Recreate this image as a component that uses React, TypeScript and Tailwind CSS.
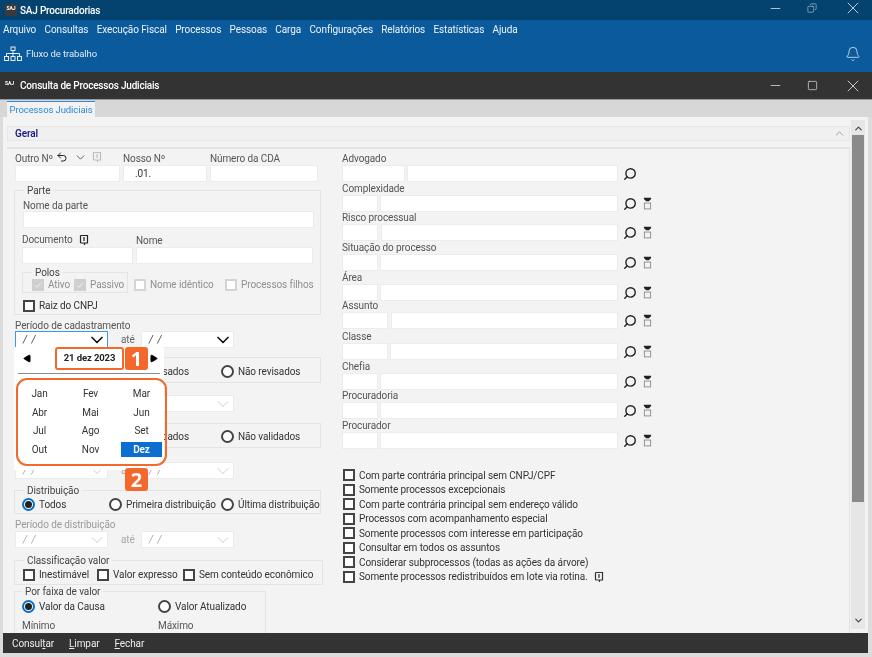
import { Bell, ChevronDown, ChevronUp, Copy, Minus, Play, Search, Square, Undo2, X } from 'lucide-react'

const MENU = ['Arquivo', 'Consultas', 'Execução Fiscal', 'Processos', 'Pessoas', 'Carga', 'Configurações', 'Relatórios', 'Estatísticas', 'Ajuda']
const MESES = ['Jan', 'Fev', 'Mar', 'Abr', 'Mai', 'Jun', 'Jul', 'Ago', 'Set', 'Out', 'Nov', 'Dez']
const OPCOES = [
  'Com parte contrária principal sem CNPJ/CPF',
  'Somente processos excepcionais',
  'Com parte contrária principal sem endereço válido',
  'Processos com acompanhamento especial',
  'Somente processos com interesse em participação',
  'Consultar em todos os assuntos',
  'Considerar subprocessos (todas as ações da árvore)',
  'Somente processos redistribuídos em lote via rotina.',
]
const CAMPOS = [
  { label: 'Advogado', cod: 63, gap: 2, top: 0, filtro: false },
  { label: 'Complexidade', cod: 36, gap: 2, top: 0, filtro: true },
  { label: 'Risco processual', cod: 36, gap: 3, top: -1, filtro: true },
  { label: 'Situação do processo', cod: 36, gap: 2, top: 0, filtro: true },
  { label: 'Área', cod: 36, gap: 2, top: 0, filtro: true },
  { label: 'Assunto', cod: 46, gap: 3, top: -2, filtro: true },
  { label: 'Classe', cod: 46, gap: 2, top: 1, filtro: true },
  { label: 'Chefia', cod: 36, gap: 2, top: 0, filtro: true },
  { label: 'Procuradoria', cod: 36, gap: 2, top: -1, filtro: true },
  { label: 'Procurador', cod: 36, gap: 2, top: 0, filtro: true },
]

function Input({ className = '', children }: { className?: string; children?: React.ReactNode }) {
  return <div className={`h-[17px] bg-white border border-[#ececec] text-[#333] flex items-center ${className}`}>{children}</div>
}

function Check({ label, marcado, off, className = '' }: { label: string; marcado?: boolean; off?: boolean; className?: string }) {
  return (
    <label className={`flex items-center gap-[4px] ${off ? 'text-[#8f8f8f]' : 'text-[#333]'} ${className}`}>
      <span className={`w-[12px] h-[12px] flex items-center justify-center shrink-0 border-2 ${marcado ? 'bg-[#cfcfcf] border-[#cfcfcf]' : off ? 'bg-white border-[#d4d4d4]' : 'bg-white border-[#444]'}`}>
        {marcado && (
          <svg viewBox="0 0 12 12" className="w-[10px] h-[10px]">
            <path d="M1.5 6.5 4.5 9.5 10.5 2.5" fill="none" stroke="#f2f2f2" strokeWidth="1.4" />
          </svg>
        )}
      </span>
      <span className="whitespace-nowrap">{label}</span>
    </label>
  )
}

function Radio({ label, marcado, className = '' }: { label: string; marcado?: boolean; className?: string }) {
  return (
    <label className={`flex items-center gap-[4px] text-[#333] ${className}`}>
      <span className={`w-[13px] h-[13px] rounded-full border-2 flex items-center justify-center shrink-0 bg-white ${marcado ? 'border-[#0a6fc9]' : 'border-[#444]'}`}>
        {marcado && <span className="w-[7px] h-[7px] rounded-full bg-[#222]" />}
      </span>
      <span className="whitespace-nowrap">{label}</span>
    </label>
  )
}

function Data({ ativo, off, className = '' }: { ativo?: boolean; off?: boolean; className?: string }) {
  return (
    <div className={`w-[93px] h-[17px] flex items-center justify-between pl-[7px] bg-white border ${ativo ? 'border-[#3b9be0]' : 'border-[#ececec]'} ${off ? 'text-[#a8a8a8]' : 'text-[#444]'} ${className}`}>
      <span className="italic tracking-[1px]">/ /</span>
      <ChevronDown size={20} strokeWidth={off ? 1 : 2} className={off ? 'text-[#c4c4c4]' : 'text-[#111]'} />
    </div>
  )
}

function Grupo({ titulo, className = '', children }: { titulo?: string; className?: string; children: React.ReactNode }) {
  return (
    <fieldset className={`border border-[#e4e4e4] ${className}`}>
      {titulo && <legend className="ml-[9px] px-[3px] h-[14px] leading-[16px] text-[#444]">{titulo}</legend>}
      {children}
    </fieldset>
  )
}

function Lupa() {
  return <Search size={14} strokeWidth={2.4} className="-scale-x-100 text-[#222]" />
}

function Filtro() {
  return (
    <svg viewBox="0 0 10 14" className="w-[9px] h-[13px]">
      <path d="M1 0.5h8v1.5L6.5 4.5h-3L1 2z" fill="#222" />
      <rect x="1.5" y="6.5" width="7" height="6.5" fill="#f2f2f2" stroke="#8a8a8a" />
    </svg>
  )
}

function Nota({ className = '' }: { className?: string }) {
  return (
    <svg viewBox="0 0 12 12" className={`w-[12px] h-[12px] ${className}`}>
      <path d="M2.5 1.5h7v7.5H6.5v2M6.5 9h-4zM2.5 1.5V9M6 3v4" fill="none" stroke="currentColor" strokeWidth="1.2" />
    </svg>
  )
}

function Badge({ n, className = '' }: { n: number; className?: string }) {
  return (
    <div className={`absolute w-[23px] h-[23px] rounded-[3px] bg-[#f4682c] text-white font-bold text-[20px] leading-[23px] text-center font-['Open_Sans',sans-serif] ${className}`}>{n}</div>
  )
}

function Calendario() {
  return (
    <div className="absolute left-[-1px] top-[16px] z-10 w-[150px] h-[123px] bg-white">
      <div className="h-[23px] flex items-center">
        <Play size={9} className="ml-[9px] rotate-180 fill-black text-black" />
        <div className="ml-[23px] w-[69px] h-[23px] border-2 border-[#f4682c] rounded-[3px] font-bold text-[9.5px] text-[#222] flex items-center justify-center">21 dez 2023</div>
        <Play size={9} className="ml-[25px] fill-black text-black" />
      </div>
      <div className="mx-[4px] mt-[3px] h-px bg-[#8c8c8c]" />
      <div className="grid grid-cols-3 mt-[12px] w-[153px]">
        {MESES.map(m => (
          <div key={m} className={`h-[15px] mb-[3.6px] flex items-center justify-center ${m === 'Dez' ? 'w-[41px] justify-self-center bg-[#0a6fd0] text-white font-semibold' : 'text-[#333]'}`}>{m}</div>
        ))}
      </div>
      <div className="absolute left-[2px] top-[31px] w-[151px] h-[88px] rounded-[11px] border-2 border-[#f4682c]" />
      <Badge n={1} className="left-[111px] top-0" />
      <Badge n={2} className="left-[111px] top-[121px]" />
    </div>
  )
}

function ColunaEsquerda() {
  return (
    <div className="w-[309px] shrink-0 ml-[7px] pt-[3px]">
      <div className="flex pl-[1px] text-[#555]">
        <div className="w-[108px]">
          <div className="h-[13px] leading-[13px] flex items-center">
            Outro Nº
            <Undo2 size={12} strokeWidth={2} className="ml-[3px] -mt-[3px] text-[#222]" />
            <ChevronDown size={13} strokeWidth={1.5} className="ml-[6px] -mt-[3px] text-[#444]" />
            <Nota className="ml-[4px] -mt-[3px] text-[#bdbdbd]" />
          </div>
          <Input className="w-[105px]" />
        </div>
        <div className="w-[87px]">
          <div className="h-[13px] leading-[13px]">Nosso Nº</div>
          <Input className="w-[84px] pl-[11px] text-[#222]">.01.</Input>
        </div>
        <div>
          <div className="h-[13px] leading-[13px]">Número da CDA</div>
          <Input className="w-[108px]" />
        </div>
      </div>

      <Grupo titulo="Parte" className="h-[132px] mt-[1px] w-[307px]">
        <div className="pl-[8px] text-[#555]">
          <div className="h-[14px] leading-[18px]">Nome da parte</div>
          <Input className="w-[291px]" />
          <div className="flex mt-[5px]">
            <div className="w-[113px]">
              <div className="h-[14px] leading-[16px] flex items-center -ml-[1px]">Documento<Nota className="ml-[5px] text-[#222]" /></div>
              <Input className="w-[111px] -ml-[1px]" />
            </div>
            <div>
              <div className="h-[14px] leading-[16px]">Nome</div>
              <Input className="w-[177px]" />
            </div>
          </div>
          <div className="flex items-start h-[30px] mt-[1px] -ml-[1px]">
            <Grupo titulo="Polos" className="w-[106px] h-[28px]">
              <div className="flex pl-[9px] -mt-[2px]">
                <Check label="Ativo" marcado off className="w-[42px]" />
                <Check label="Passivo" marcado off />
              </div>
            </Grupo>
            <div className="flex ml-[6px] mt-[12px]">
              <Check label="Nome idêntico" off className="w-[91px]" />
              <Check label="Processos filhos" off />
            </div>
          </div>
          <div className="mt-[3px]"><Check label="Raiz do CNPJ" /></div>
        </div>
      </Grupo>

      <div className="pl-[1px] mt-[3px] h-[13px] leading-[16px] text-[#555]">Período de cadastramento</div>
      <div className="flex items-center pl-[1px] text-[#666]">
        <div className="relative">
          <Data ativo />
          <Calendario />
        </div>
        <span className="ml-[13px] w-[20px]">até</span>
        <Data />
      </div>

      <Grupo className="h-[26px] mt-[9px] w-[307px]">
        <div className="relative h-full pt-[2px] flex items-center">
          <span className="absolute right-[131px] text-[#333]">Revisados</span>
          <Radio label="Não revisados" className="ml-[206px]" />
        </div>
      </Grupo>
      <div className="flex pl-[127px] mt-[12px]"><Data off /></div>
      <Grupo className="h-[25px] mt-[11px] w-[307px]">
        <div className="relative h-full pt-[2px] flex items-center">
          <span className="absolute right-[131px] text-[#333]">Validados</span>
          <Radio label="Não validados" className="ml-[206px]" />
        </div>
      </Grupo>
      <div className="flex items-center pl-[1px] mt-[14px] text-[#a8a8a8]">
        <Data off />
        <span className="ml-[13px] w-[20px]">até</span>
        <Data off />
      </div>

      <Grupo titulo="Distribuição" className="h-[31px] mt-[4px] w-[307px]">
        <div className="flex">
          <Radio label="Todos" marcado className="ml-[7px] w-[87px]" />
          <Radio label="Primeira distribuição" className="w-[112px]" />
          <Radio label="Última distribuição" />
        </div>
      </Grupo>

      <div className="pl-[1px] mt-[3px] h-[14px] leading-[16px] text-[#9a9a9a]">Período de distribuição</div>
      <div className="flex items-center pl-[1px] text-[#a8a8a8]">
        <Data off />
        <span className="ml-[13px] w-[20px]">até</span>
        <Data off />
      </div>

      <Grupo titulo="Classificação valor" className="h-[32px] mt-[5px] w-[309px]">
        <div className="flex pl-[8px]">
          <Check label="Inestimável" className="w-[74px]" />
          <Check label="Valor expresso" className="w-[86px]" />
          <Check label="Sem conteúdo econômico" />
        </div>
      </Grupo>

      <Grupo titulo="Por faixa de valor" className="h-[60px] -mt-[1px] w-[252px] [&>legend]:ml-[7px]">
        <div className="flex pl-[7px] pt-[1px]">
          <Radio label="Valor da Causa" marcado className="w-[136px]" />
          <Radio label="Valor Atualizado" />
        </div>
        <div className="flex pl-[7px] mt-[4px] text-[#555]">
          <span className="w-[136px]">Mínimo</span>
          <span>Máximo</span>
        </div>
      </Grupo>
    </div>
  )
}

function ColunaDireita() {
  return (
    <div className="ml-[19px] w-[330px] pt-[3px] text-[#555]">
      {CAMPOS.map(c => (
        <div key={c.label} style={{ marginTop: c.top }}>
          <div className="h-[13px] leading-[13px]">{c.label}</div>
          <div className="flex items-center">
            <div className="w-[276px] flex shrink-0" style={{ gap: c.gap }}>
              <div style={{ width: c.cod }} className="shrink-0"><Input /></div>
              <Input className="flex-1" />
            </div>
            <div className="flex items-center pl-[5px] gap-[6px]">
              <Lupa />
              {c.filtro && <Filtro />}
            </div>
          </div>
        </div>
      ))}
      <div className="mt-[20px] flex flex-col gap-[2.5px] ml-[1px]">
        {OPCOES.map(o => (
          <div key={o} className="h-[12px] flex items-center">
            <Check label={o} />
            {o.endsWith('rotina.') && <Nota className="ml-[5px] text-[#333]" />}
          </div>
        ))}
      </div>
    </div>
  )
}

export default function App() {
  return (
    <div className="w-[872px] h-[657px] overflow-hidden flex flex-col bg-[#dcdcdc] text-[10px] font-['Roboto',sans-serif] tracking-[-0.1px] blur-[0.35px]">
      <div className="h-[20px] shrink-0 bg-[#04436f] flex items-center text-white">
        <div className="ml-[5px] w-[12px] h-[12px] bg-[#3a3a3a] text-[5px] font-bold leading-[9px] text-center">SAJ</div>
        <span className="ml-[3px] text-[10px] font-medium tracking-[-0.2px]">SAJ Procuradorias</span>
        <Minus size={15} strokeWidth={1.2} className="ml-auto mr-[24px] -mt-[4px] text-[#e2ebf2]" />
        <Copy size={10} strokeWidth={1.2} className="mr-[26px] -mt-[4px] text-[#e2ebf2] -scale-x-100" />
        <X size={20} strokeWidth={1} className="mr-[9px] -mt-[4px] text-[#e2ebf2]" />
      </div>

      <div className="h-[52px] shrink-0 bg-[#0a5a9c] text-[#eef3f8]">
        <div className="flex gap-[8.3px] pl-[3px] pt-[1px] h-[18px] items-center">
          {MENU.map(m => <span key={m}>{m}</span>)}
        </div>
        <div className="flex items-center h-[32px] pl-[4px] pr-[11px]">
          <svg viewBox="0 0 18 16" className="w-[18px] h-[16px]" fill="none" stroke="#e6edf3" strokeWidth="1">
            <rect x="7" y="1" width="4" height="3.5" />
            <path d="M9 4.5v3M2.5 10.5V7.5h13v3M9 7.5v3" />
            <rect x="0.5" y="10.5" width="4" height="4" />
            <rect x="7" y="10.5" width="4" height="4" />
            <rect x="13.5" y="10.5" width="4" height="4" />
          </svg>
          <span className="ml-[4px] text-[9.5px] text-[#dfe8f0]">Fluxo de trabalho</span>
          <Bell size={16} strokeWidth={1.2} className="ml-auto text-[#dfe8f0]" />
        </div>
      </div>

      <div className="h-[27px] shrink-0 bg-[#333] flex items-center text-white">
        <span className="ml-[5px] w-[12px] text-[5px] font-bold -mt-[4px]">SAJ</span>
        <span className="ml-[3px] text-[10px] font-medium tracking-[-0.2px]">Consulta de Processos Judiciais</span>
        <Minus size={15} strokeWidth={1.2} className="ml-auto mr-[24px] text-[#e4e4e4]" />
        <Square size={11} strokeWidth={1.5} className="mr-[25px] text-[#e4e4e4]" />
        <X size={20} strokeWidth={1} className="mr-[9px] text-[#e4e4e4]" />
      </div>

      <div className="h-[18px] shrink-0 bg-[#d7d7d7] pl-[7px] flex items-end border-t border-[#9a9a9a]">
        <div className="h-[16px] w-[88px] border-t border-[#2a8ad8] bg-[#f2f2f2] text-[#2a8ad8] text-center text-[9.5px] leading-[15px] whitespace-nowrap">Processos Judiciais</div>
      </div>

      <div className="flex-1 min-h-0 ml-[3px] mr-[4px] bg-[#f3f3f3] flex">
        <div className="flex-1 min-w-0 pl-[4px] flex flex-col">
          <div className="mt-[9px] h-[15px] shrink-0 bg-[#f0f0f0] border border-[#e6e6e6] flex items-center justify-between pl-[7px] pr-[3px] text-[#1b1b8a] font-semibold">
            Geral
            <ChevronUp size={13} className="text-[#777]" strokeWidth={1.2} />
          </div>
          <div className="mt-[6px] flex-1 min-h-0 overflow-hidden border-t-2 border-r border-[#e2e2e2] flex">
            <ColunaEsquerda />
            <ColunaDireita />
          </div>
        </div>
        <div className="w-[14px] shrink-0 ml-[1px] mt-[3px] mb-[4px] mr-[3px] bg-[#e6e6e6] flex flex-col items-center">
          <ChevronUp size={11} strokeWidth={2.5} className="text-[#444] mt-[3px]" />
          <div className="w-[12px] h-[367px] mt-[1px] bg-[#8a8a8a]" />
          <ChevronDown size={11} strokeWidth={2.5} className="text-[#444] mt-auto mb-[3px]" />
        </div>
      </div>

      <div className="h-[20px] shrink-0 ml-[3px] mr-[4px] mb-[4px] bg-[#333] flex items-center pl-[9px] gap-[15px] text-[#eee]">
        <span>Consul<u>t</u>ar</span>
        <span><u>L</u>impar</span>
        <span><u>F</u>echar</span>
      </div>
    </div>
  )
}
